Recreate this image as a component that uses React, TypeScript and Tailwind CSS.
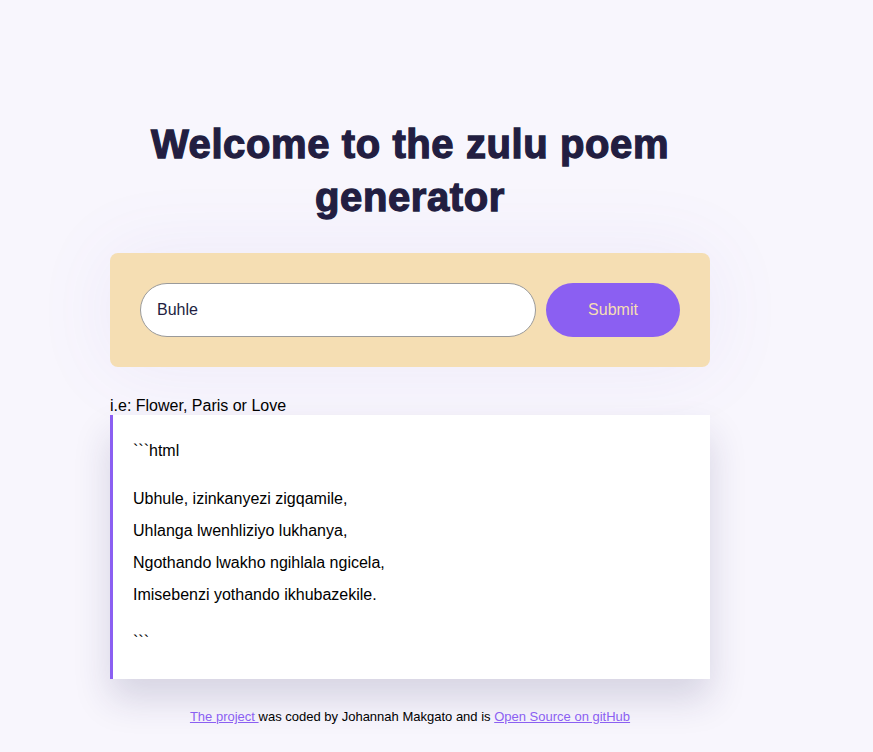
export default function App() {
  const sans = { fontFamily: '"Liberation Sans", Arial, sans-serif' };
  return (
    <div className="min-h-[752px] bg-[#f8f6fd] text-black" style={sans}>
      <div className="ml-[110px] w-[600px] pt-[118px]">
        <h1
          className="text-center text-[40px] leading-[53px] font-black tracking-[0.6px] text-[#221e41] px-[20px] [-webkit-text-stroke:1.3px_#221e41]"
          style={{ fontFamily: '"Arial Black", "Liberation Sans", Arial, sans-serif' }}
        >
          Welcome to the zulu poem generator
        </h1>
        <form
          className="mt-[29px] flex gap-[10px] rounded-[8px] bg-[#f5deb3] p-[30px] shadow-[0_0_80px_rgba(110,90,210,0.08)]"
          onSubmit={(e) => e.preventDefault()}
        >
          <input
            defaultValue="Buhle"
            className="h-[54px] w-[396px] rounded-full border border-[#9a9a9a] bg-white pl-[16px] text-[16px] text-[#221e41] outline-none"
            style={sans}
          />
          <button className="h-[54px] w-[134px] rounded-full bg-[#8b5ff2] text-[16px] text-[#f5deb3]" style={sans}>
            Submit
          </button>
        </form>
        <div className="mt-[30px] text-[16px] leading-[18px]">i.e: Flower, Paris or Love</div>
        <div className="border-l-[3px] border-[#8b5ff2] bg-white px-[20px] pt-[20px] pb-[21px] text-[16px] leading-[32px] shadow-[0_20px_35px_rgba(40,30,90,0.16)]">
          <p>```html</p>
          <p className="mt-[16px]">
            Ubhule, izinkanyezi zigqamile,
            <br />
            Uhlanga lwenhliziyo lukhanya,
            <br />
            Ngothando lwakho ngihlala ngicela,
            <br />
            Imisebenzi yothando ikhubazekile.
          </p>
          <p className="mt-[15px]">```</p>
        </div>
        <footer className="mt-[29px] text-center text-[13px] leading-[18px]">
          <a href="#" className="text-[#8b5ff2] underline">The project </a>
          was coded by Johannah Makgato and is{" "}
          <a href="#" className="text-[#8b5ff2] underline">Open Source on gitHub</a>
        </footer>
      </div>
    </div>
  );
}
